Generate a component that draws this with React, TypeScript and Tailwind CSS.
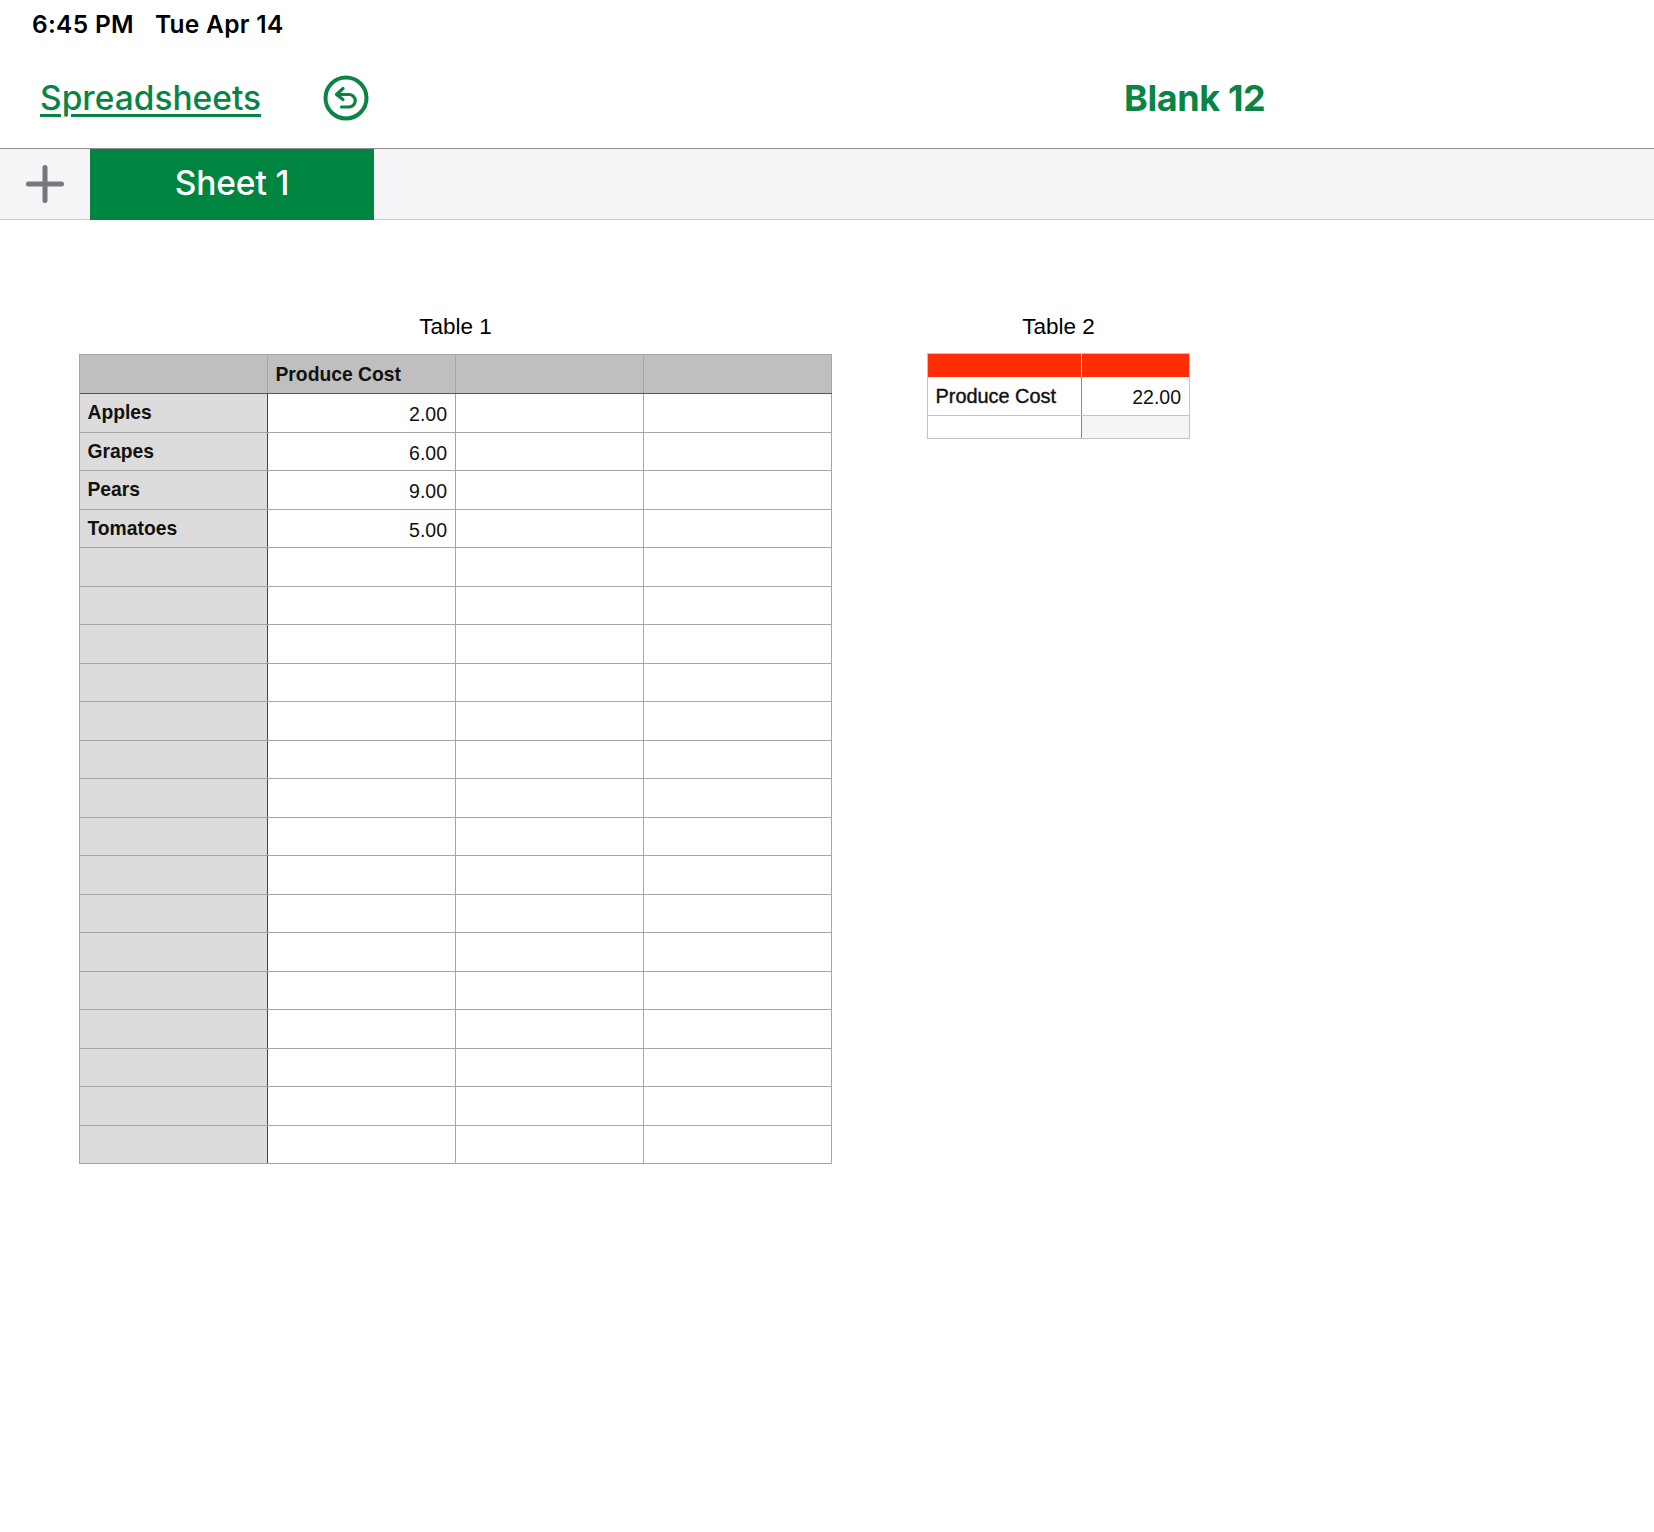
const inter = "font-['Inter',sans-serif]";
const helv = "font-['Liberation_Sans',Arial,sans-serif]";

const produce: [string, string][] = [
  ["Apples", "2.00"],
  ["Grapes", "6.00"],
  ["Pears", "9.00"],
  ["Tomatoes", "5.00"],
];
const rows: [string, string][] = [
  ...produce,
  ...Array.from({ length: 16 }, (): [string, string] => ["", ""]),
];

function Table1() {
  return (
    <div className="w-[753px] shrink-0">
      <div className="h-[46px] text-center text-[22.5px] leading-[26px] text-black pt-[6px]">Table 1</div>
      <div className="border-t border-l border-[#a6a6a6] w-[753px]">
        <div className="flex h-[39px] bg-[#bfbfbf] border-b border-[#555]">
          <div className="w-[188px] border-r border-[#a6a6a6]" />
          <div className="w-[188px] border-r border-[#a6a6a6] pl-[7.5px] text-[19.3px] leading-[39px] font-bold text-[#111]">Produce Cost</div>
          <div className="w-[188px] border-r border-[#a6a6a6]" />
          <div className="w-[188px] border-r border-[#a6a6a6]" />
        </div>
        <div className="grid grid-rows-[repeat(20,38.5px)]">
          {rows.map(([name, value], i) => (
            <div key={i} className="flex border-b border-[#a6a6a6]">
              <div className="w-[188px] bg-[#dcdcdc] border-r border-[#444] pl-[7.5px] text-[19.3px] leading-[38px] font-bold text-[#111]">{name}</div>
              <div className="w-[188px] border-r border-[#a6a6a6] pr-[8px] text-right text-[19.5px] leading-[40px] text-[#111]">{value}</div>
              <div className="w-[188px] border-r border-[#a6a6a6]" />
              <div className="w-[188px] border-r border-[#a6a6a6]" />
            </div>
          ))}
        </div>
      </div>
    </div>
  );
}

function Table2() {
  return (
    <div className="w-[263px] shrink-0 ml-[95px]">
      <div className="h-[45px] text-center text-[22.5px] leading-[26px] text-black pt-[6px]">Table 2</div>
      <div className="border-t border-l border-r border-b border-[#c4c4c4] w-[263px]">
        <div className="flex h-[23px] bg-[#ff2d05]">
          <div className="w-[154px] border-r border-[#e8e8e8]" />
          <div className="flex-1" />
        </div>
        <div className="flex h-[39px] border-b border-[#c4c4c4]">
          <div className="w-[154px] border-r border-[#8a8a8a] pl-[7.5px] text-[19.9px] leading-[38px] text-[#111] [-webkit-text-stroke:0.4px_#111]">Produce Cost</div>
          <div className="flex-1 pr-[8px] text-right text-[19.5px] leading-[40px] text-[#111]">22.00</div>
        </div>
        <div className="flex h-[22px]">
          <div className="w-[154px] border-r border-[#8a8a8a]" />
          <div className="flex-1 bg-[#f5f5f5]" />
        </div>
      </div>
    </div>
  );
}

export default function App() {
  return (
    <div className={`w-[1654px] h-[1532px] bg-white overflow-hidden ${helv}`}>
      <div className={`h-[48px] flex items-center pl-[32px] text-[24.5px] font-semibold text-black tracking-[0.3px] ${inter}`}>
        <span>6:45 PM</span>
        <span className="ml-[21px]">Tue Apr 14</span>
      </div>
      <div className={`h-[100px] flex items-center relative ${inter}`}>
        <a className="ml-[40px] mt-[2px] text-[33.5px] font-medium text-[#0a8444] underline underline-offset-[4px] decoration-[3px] leading-none w-[283px]">Spreadsheets</a>
        <svg width="46" height="46" viewBox="0 0 46 46" fill="none" stroke="#0a8444" strokeLinecap="round" strokeLinejoin="round">
          <circle cx="23" cy="23" r="20.5" strokeWidth="4" />
          <path d="M20 13.5 L13.5 19.5 L20 24.5" strokeWidth="3.2" />
          <path d="M14.5 19.5 H26 A6.2 6.2 0 0 1 26 32 H18.5" strokeWidth="3.2" />
        </svg>
        <div className="ml-[755px] text-[36px] font-bold text-[#0a8444] leading-none tracking-[-0.4px]">Blank 12</div>
      </div>
      <div className={`h-[72px] bg-[#f5f5f7] border-t border-b border-t-[#8e8e8e] border-b-[#c9c9c9] flex ${inter}`}>
        <div className="w-[90px] flex items-center justify-center">
          <svg width="38" height="38" viewBox="0 0 38 38" fill="none" stroke="#77777c" strokeWidth="5" strokeLinecap="round">
            <path d="M19 2.5V35.5M2.5 19H35.5" />
          </svg>
        </div>
        <div className="w-[284px] bg-[#008540] flex items-center justify-center text-white text-[33.5px] font-medium leading-none pb-[1px] h-[71px] tracking-[-0.1px]">Sheet 1</div>
      </div>
      <div className="flex pl-[79px] pt-[88px]">
        <Table1 />
        <Table2 />
      </div>
    </div>
  );
}
